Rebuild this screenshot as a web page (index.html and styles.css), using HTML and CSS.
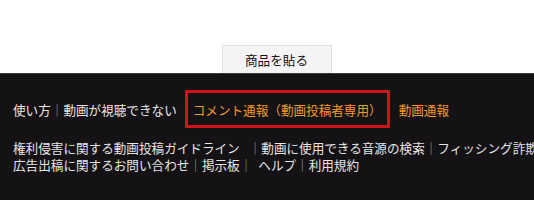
FILE: index.html
```html
<!DOCTYPE html>
<html lang="ja">
<head>
  <meta charset="UTF-8">
  <meta name="viewport" content="width=device-width, initial-scale=1.0">
  <title>フッター</title>
  <link rel="stylesheet" href="styles.css">
</head>
<body>
  <div class="top">
    <button class="paste-btn">商品を貼る</button>
  </div>

  <div class="footer">
    <div class="links-main">
      <a href="#">使い方</a><span class="sep">｜</span><a href="#">動画が視聴できない</a>
      <div class="report-box">
        <a href="#" class="orange">コメント通報（動画投稿者専用）</a>
      </div>
      <a href="#" class="orange video-report">動画通報</a>
    </div>

    <div class="links-sub">
      <p><a href="#">権利侵害に関する動画投稿ガイドライン</a><span class="sep gap-left">｜</span><a href="#">動画に使用できる音源の検索</a><span class="sep">｜</span><a href="#">フィッシング詐欺</a></p>
      <p><a href="#">広告出稿に関するお問い合わせ</a><span class="sep">｜</span><a href="#">掲示板</a><span class="sep gap-right">｜</span><a href="#">ヘルプ</a><span class="sep">｜</span><a href="#">利用規約</a></p>
    </div>
  </div>
</body>
</html>
```

FILE: styles.css
```css
body {
  margin: 0;
  background: #fff;
  font-family: "Noto Sans CJK JP", "Noto Sans", sans-serif;
  overflow: hidden;
}

.top {
  height: 73px;
  display: flex;
  justify-content: center;
  align-items: flex-end;
  padding-left: 19px;
  box-sizing: border-box;
}

.paste-btn {
  width: 110px;
  height: 28px;
  background: #f4f4f4;
  border: 1px solid #e2e2e2;
  border-bottom: none;
  font-family: inherit;
  font-size: 12.6px;
  color: #111;
  padding: 0;
}

.footer {
  box-sizing: border-box;
  background: #141215;
  border-top: 1px solid #3a3a3a;
  padding: 16px 0 0 13px;
  height: 127px;
  overflow: hidden;
  color: #e6e6e6;
  font-size: 12.6px;
  white-space: nowrap;
}

.footer a {
  color: #e6e6e6;
  text-decoration: none;
}

.footer a.orange {
  color: #f39a2c;
}

.sep {
  color: #a0a0a0;
}

.sep.gap-left {
  margin-left: 9px;
}

.sep.gap-right {
  margin-right: 6px;
}

.links-main {
  display: flex;
  align-items: center;
  height: 38px;
  line-height: 17px;
}

.report-box {
  margin-left: 8px;
  height: 38px;
  box-sizing: border-box;
  border: 3px solid #d3121b;
  padding: 0 5px;
  display: flex;
  align-items: center;
}

.video-report {
  margin-left: 9px;
}

.links-sub {
  margin-top: 11px;
  line-height: 17px;
}

.links-sub p {
  margin: 0;
}
```
